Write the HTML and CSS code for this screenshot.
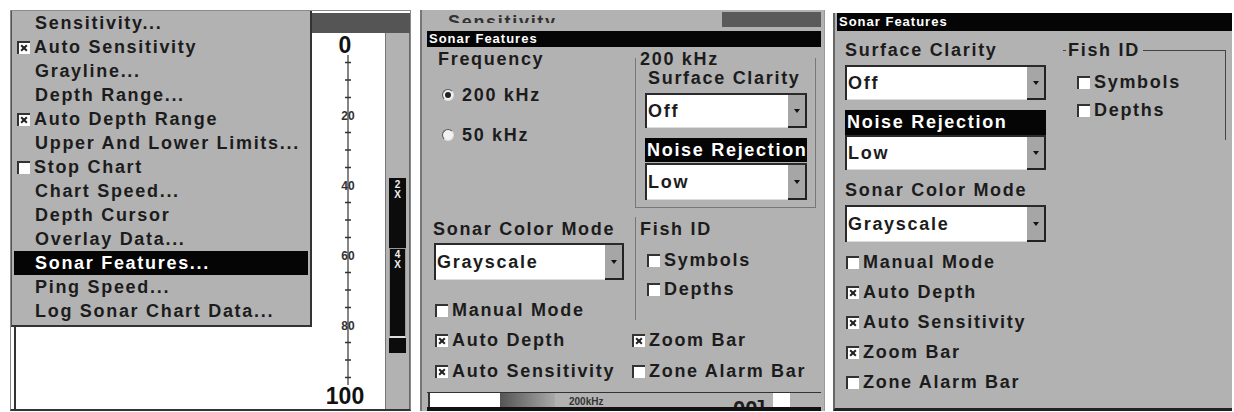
FILE: index.html
```html
<!DOCTYPE html>
<html lang="en">
<head>
    <meta charset="UTF-8">
    <meta name="viewport" content="width=device-width, initial-scale=1.0">
    <title>Sonar Features</title>
    <link rel="stylesheet" href="styles.css">
</head>
<body>
<div class="screens">

    <!-- Screen 1: sonar chart with the main menu open -->
    <section class="screen chart-screen">
        <div class="top-band"></div>
        <div class="chart-row">
            <div class="chart"></div>
            <div class="scale">
                <svg width="73" height="376" viewBox="0 0 73 376">
                    <path d="M36 22V352" stroke="#333" stroke-width="1.2" fill="none"/>
                    <path d="M33 29.5h6M33 47h6M33 64.5h6M33 99.5h6M33 117h6M33 134.5h6M33 169.5h6M33 187h6M33 204.5h6M33 239.5h6M33 257h6M33 274.5h6M33 309.5h6M33 327h6M33 344.5h6" stroke="#333" stroke-width="1.4" fill="none"/>
                    <text x="33" y="20" class="big-num">0</text>
                    <text x="36" y="87" class="num">20</text>
                    <text x="36" y="157" class="num">40</text>
                    <text x="36" y="227" class="num">60</text>
                    <text x="36" y="297" class="num">80</text>
                    <text x="33" y="371" class="big-num">100</text>
                </svg>
            </div>
            <div class="zoom-strip">
                <div class="zoom-bar">
                    <div class="zoom-label">2<br>X</div>
                    <div class="zoom-seg">
                        <div class="zoom-label">4<br>X</div>
                    </div>
                </div>
            </div>
        </div>

        <ul class="menu">
            <li>Sensitivity...</li>
            <li><span class="cb on"></span>Auto Sensitivity</li>
            <li>Grayline...</li>
            <li>Depth Range...</li>
            <li><span class="cb on"></span>Auto Depth Range</li>
            <li>Upper And Lower Limits...</li>
            <li><span class="cb"></span>Stop Chart</li>
            <li>Chart Speed...</li>
            <li>Depth Cursor</li>
            <li>Overlay Data...</li>
            <li class="selected">Sonar Features...</li>
            <li>Ping Speed...</li>
            <li>Log Sonar Chart Data...</li>
        </ul>
    </section>

    <!-- Screen 2: Sonar Features dialog, 200 kHz unit -->
    <section class="screen dialog-screen">
        <div class="behind">
            <div class="behind-text">Sensitivity...</div>
            <div class="behind-band"></div>
        </div>
        <div class="dialog">
            <div class="title">Sonar Features</div>
            <div class="dialog-body">
                <div class="upper">
                    <div class="col-left">
                        <div class="lbl indent">Frequency</div>
                        <div class="radio-row first"><span class="rb on"></span>200 kHz</div>
                        <div class="radio-row"><span class="rb"></span>50 kHz</div>
                    </div>
                    <div class="col-right">
                        <div class="lbl legend">200 kHz</div>
                        <div class="freq-group">
                            <div class="lbl small-gap">Surface Clarity</div>
                            <div class="dd dd-off">
                                <span class="dd-val">Off</span>
                                <span class="dd-btn"><i class="arrow"></i></span>
                            </div>
                            <div class="hilite noise">Noise Rejection</div>
                            <div class="dd dd-low">
                                <span class="dd-val">Low</span>
                                <span class="dd-btn"><i class="arrow"></i></span>
                            </div>
                        </div>
                    </div>
                </div>

                <div class="lower">
                    <div class="col-left">
                        <div class="lbl">Sonar Color Mode</div>
                        <div class="dd dd-gray">
                            <span class="dd-val">Grayscale</span>
                            <span class="dd-btn"><i class="arrow"></i></span>
                        </div>
                        <div class="check-row manual"><span class="cb"></span>Manual Mode</div>
                    </div>
                    <div class="fish">
                        <div class="lbl">Fish ID</div>
                        <div class="check-row sym"><span class="cb"></span>Symbols</div>
                        <div class="check-row dep"><span class="cb"></span>Depths</div>
                    </div>
                </div>

                <div class="check-grid">
                    <div class="check-row"><span class="cb on"></span>Auto Depth</div>
                    <div class="check-row"><span class="cb on"></span>Zoom Bar</div>
                    <div class="check-row"><span class="cb on"></span>Auto Sensitivity</div>
                    <div class="check-row"><span class="cb"></span>Zone Alarm Bar</div>
                </div>
            </div>
            <div class="status">
                <span class="st-tick"></span>
                <span class="st-white"></span>
                <span class="st-fade"></span>
                <span class="st-freq">200kHz</span>
                <span class="st-depth">00]</span>
                <span class="st-white short"></span>
            </div>
        </div>
    </section>

    <!-- Screen 3: Sonar Features dialog, single frequency unit -->
    <section class="screen feature-screen">
        <div class="title">Sonar Features</div>
        <div class="feature-body">
            <div class="feature-left">
                <div class="lbl">Surface Clarity</div>
                <div class="dd dd-off2">
                    <span class="dd-val">Off</span>
                    <span class="dd-btn"><i class="arrow"></i></span>
                </div>
                <div class="hilite noise2">Noise Rejection</div>
                <div class="dd dd-low2">
                    <span class="dd-val">Low</span>
                    <span class="dd-btn"><i class="arrow"></i></span>
                </div>
                <div class="lbl color2">Sonar Color Mode</div>
                <div class="dd dd-gray2">
                    <span class="dd-val">Grayscale</span>
                    <span class="dd-btn"><i class="arrow"></i></span>
                </div>
                <div class="check-list">
                    <div class="check-row"><span class="cb"></span>Manual Mode</div>
                    <div class="check-row"><span class="cb on"></span>Auto Depth</div>
                    <div class="check-row"><span class="cb on"></span>Auto Sensitivity</div>
                    <div class="check-row"><span class="cb on"></span>Zoom Bar</div>
                    <div class="check-row"><span class="cb"></span>Zone Alarm Bar</div>
                </div>
            </div>
            <div class="fish-box">
                <div class="fish-head"><span>Fish ID</span></div>
                <div class="fish-list">
                    <div class="check-row"><span class="cb"></span>Symbols</div>
                    <div class="check-row"><span class="cb"></span>Depths</div>
                </div>
            </div>
        </div>
    </section>

</div>
</body>
</html>
```

FILE: styles.css
```css
:root {
    --gray: #b2b2b2;
    --gray-dark: #a6a6a6;
    --ink: #1c1c1c;
    --edge: #2a2a2a;
}

* {
    box-sizing: border-box;
}

body {
    margin: 0;
    padding: 10px 0 0 10px;
    background: #fff;
    font-family: "Liberation Sans", Arial, sans-serif;
    font-weight: bold;
    font-size: 18px;
    letter-spacing: 1.7px;
    color: var(--ink);
}

.screens {
    display: flex;
    align-items: flex-start;
}

.screen {
    position: relative;
    overflow: hidden;
}

/* ---------- screen 1 ---------- */

.chart-screen {
    width: 401px;
    height: 401px;
    border: 1px solid #8a8a8a;
    border-bottom: 2px solid #333;
    background: #fff;
}

.top-band {
    height: 20px;
    margin-top: 2px;
    background: #555;
}

.chart-row {
    display: flex;
    height: 376px;
}

.chart {
    width: 301px;
    margin-left: 3px;
    border-left: 2px solid #333;
}

.scale {
    width: 73px;
    margin-left: -3px;
}

.scale svg {
    display: block;
}

.scale .num {
    font-size: 12px;
    font-weight: bold;
    letter-spacing: 0;
    fill: #333;
    text-anchor: middle;
}

.scale .big-num {
    font-size: 23px;
    font-weight: bold;
    letter-spacing: 0;
    fill: #111;
    text-anchor: middle;
}

.zoom-strip {
    width: 25px;
    background: var(--gray);
    border-left: 1px solid #777;
    border-right: 1px solid #666;
}

.zoom-bar {
    width: 17px;
    height: 175px;
    margin: 145px 0 0 3px;
    padding-top: 2px;
    background: #0c0c0c;
}

.zoom-label {
    color: #eee;
    font-size: 10px;
    line-height: 10px;
    letter-spacing: 0;
    text-align: center;
}

.zoom-seg {
    height: 90px;
    margin-top: 48px;
    border: 1px solid #999;
    border-bottom: 2px solid #ddd;
    padding-top: 1px;
}

.menu {
    position: absolute;
    left: 0;
    top: 0;
    width: 301px;
    height: 316px;
    margin: 0;
    padding: 0 2px;
    list-style: none;
    background: var(--gray);
    border-left: 1px solid #555;
    border-right: 2px solid #333;
    border-bottom: 2px solid #333;
}

.menu li {
    display: flex;
    align-items: center;
    height: 24px;
    padding-left: 21px;
    white-space: nowrap;
}

.menu li .cb {
    margin-left: -18px;
    margin-right: 4px;
}

.menu li.selected {
    background: #050505;
    color: #fff;
}

/* ---------- shared controls ---------- */

.title {
    background: #050505;
    color: #fff;
    font-size: 13px;
    letter-spacing: 1px;
    padding-left: 2px;
    white-space: nowrap;
}

.lbl {
    line-height: 24px;
    white-space: nowrap;
}

.cb {
    position: relative;
    flex: none;
    width: 13px;
    height: 13px;
    margin-right: 4px;
    background: #fff;
    border-top: 2px solid #333;
    border-left: 2px solid #333;
}

.cb.on::before,
.cb.on::after {
    content: "";
    position: absolute;
    left: 1px;
    top: 4px;
    width: 8px;
    height: 2px;
    background: #222;
    transform: rotate(45deg);
}

.cb.on::after {
    transform: rotate(-45deg);
}

.rb {
    position: relative;
    flex: none;
    width: 12px;
    height: 12px;
    margin-right: 8px;
    border-radius: 50%;
    background: #f2f2f2;
    border: 1px solid;
    border-color: #555 #ddd #ddd #555;
}

.rb.on::after {
    content: "";
    position: absolute;
    left: 2px;
    top: 2px;
    width: 6px;
    height: 6px;
    border-radius: 50%;
    background: #222;
}

.check-row,
.radio-row {
    display: flex;
    align-items: center;
    height: 24px;
    white-space: nowrap;
}

.dd {
    display: flex;
    background: #fff;
    border-top: 2px solid var(--edge);
    border-left: 2px solid var(--edge);
}

.dd-val {
    flex: 1;
    display: flex;
    align-items: center;
    padding-left: 1px;
    border-bottom: 1px solid #ddd;
}

.dd-btn {
    display: flex;
    align-items: center;
    justify-content: center;
    width: 19px;
    background: var(--gray-dark);
    border-right: 2px solid #222;
    border-bottom: 2px solid #222;
}

.arrow {
    width: 0;
    height: 0;
    border-left: 3px solid transparent;
    border-right: 3px solid transparent;
    border-top: 4px solid #111;
}

.hilite {
    display: flex;
    align-items: center;
    background: #050505;
    color: #fff;
    padding-left: 2px;
    white-space: nowrap;
}

/* ---------- screen 2 ---------- */

.dialog-screen {
    width: 405px;
    height: 401px;
    margin-left: 9px;
    padding: 0 3px 0 5px;
    background: var(--gray);
    border-left: 2px solid #777;
    border-right: 1px solid #999;
}

.behind {
    display: flex;
    justify-content: space-between;
    height: 21px;
}

.behind-text {
    height: 13px;
    overflow: hidden;
    line-height: 24px;
    padding-left: 21px;
    color: #333;
}

.behind-band {
    width: 99px;
    height: 15px;
    margin-top: 2px;
    background: #5a5a5a;
}

.dialog .title {
    height: 16px;
    line-height: 16px;
}

.dialog-body {
    height: 346px;
    padding-left: 6px;
    border-bottom: 1px solid #333;
}

.upper,
.lower {
    display: flex;
}

.col-left {
    width: 202px;
}

.indent {
    padding-left: 5px;
}

.radio-row {
    padding-left: 9px;
    margin-top: 16px;
}

.radio-row.first {
    margin-top: 12px;
}

.col-right {
    width: 181px;
}

.legend {
    padding-left: 5px;
}

.freq-group {
    margin-top: -13px;
    padding: 9px 8px 7px 9px;
    border: 1px solid #777;
    border-top: none;
}

.small-gap {
    line-height: 22px;
    padding-left: 3px;
}

.dd-off {
    height: 35px;
    margin-top: 4px;
}

.noise {
    height: 24px;
    margin-top: 10px;
}

.dd-low {
    height: 37px;
    margin-top: 1px;
}

.lower .lbl {
    margin-top: 9px;
}

.dd-gray {
    width: 190px;
    height: 37px;
    margin: 2px 0 0 1px;
}

.manual {
    margin-top: 18px;
    padding-left: 2px;
}

.fish {
    height: 103px;
    margin-top: 9px;
    border-left: 1px solid #777;
    padding-left: 4px;
}

.fish .lbl {
    margin-top: 0;
}

.fish .sym {
    margin-top: 7px;
    padding-left: 7px;
}

.fish .dep {
    margin-top: 5px;
    padding-left: 7px;
}

.check-grid {
    display: grid;
    grid-template-columns: 197px 1fr;
    row-gap: 7px;
    margin-top: 6px;
}

.check-grid .check-row {
    padding-left: 2px;
}

.status {
    display: flex;
    height: 18px;
    overflow: hidden;
    border-bottom: 4px solid #111;
}

.st-tick {
    width: 2px;
    margin-left: 1px;
    background: #333;
}

.st-white {
    width: 70px;
    background: #fff;
}

.st-white.short {
    width: 17px;
}

.st-fade {
    width: 55px;
    background: linear-gradient(to right, #555, #a8a8a8);
}

.st-freq {
    width: 178px;
    padding-left: 14px;
    font-size: 10px;
    line-height: 18px;
    letter-spacing: 0;
    color: #333;
}

.st-depth {
    width: 40px;
    font-size: 22px;
    line-height: 32px;
    letter-spacing: 0;
}

/* ---------- screen 3 ---------- */

.feature-screen {
    width: 399px;
    height: 398px;
    margin: 3px 0 0 8px;
    padding-left: 2px;
    background: var(--gray);
    border-left: 2px solid #666;
    border-bottom: 3px solid #222;
}

.feature-screen .title {
    height: 18px;
    line-height: 18px;
}

.feature-body {
    display: flex;
    padding: 7px 0 0 8px;
}

.feature-left {
    width: 201px;
}

.dd-off2 {
    height: 35px;
    margin-top: 3px;
}

.noise2 {
    height: 25px;
    margin-top: 10px;
}

.dd-low2 {
    height: 35px;
}

.color2 {
    margin-top: 8px;
}

.dd-gray2 {
    height: 37px;
    margin-top: 3px;
}

.check-list {
    margin-top: 5px;
}

.check-list .check-row {
    height: 30px;
    padding-left: 1px;
}

.fish-box {
    width: 163px;
    margin-left: 17px;
}

.fish-head {
    display: flex;
    height: 24px;
    line-height: 24px;
}

.fish-head::before {
    content: "";
    width: 3px;
    margin-top: 12px;
    border-top: 1px solid #444;
}

.fish-head span {
    padding: 0 3px 0 2px;
}

.fish-head::after {
    content: "";
    flex: 1;
    margin-top: 12px;
    border-top: 1px solid #444;
    border-right: 1px solid #444;
}

.fish-list {
    height: 78px;
    padding: 6px 0 0 14px;
    border-right: 1px solid #444;
}

.fish-list .check-row {
    height: 28px;
}
```
